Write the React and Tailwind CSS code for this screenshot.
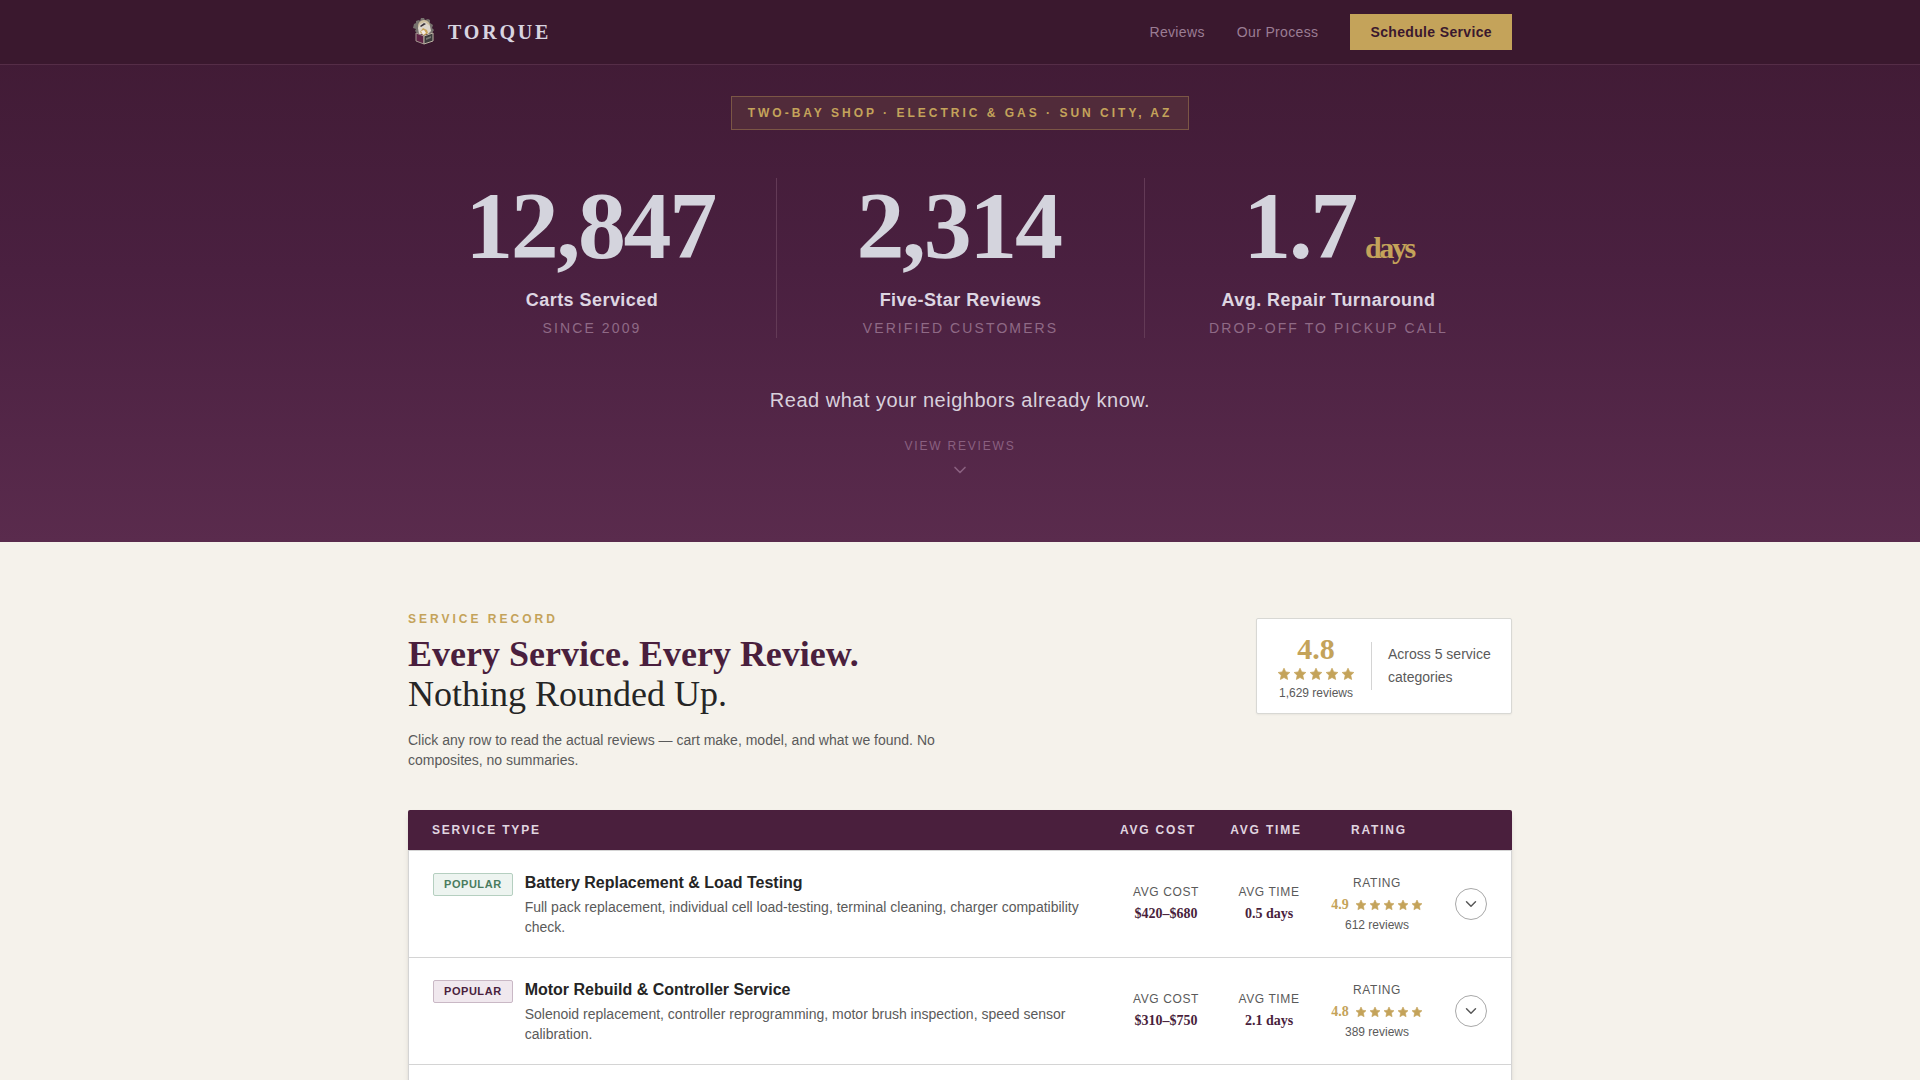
import { useState } from "react";
import { ChevronDown } from "lucide-react";

const stats = [
  { value: "12,847", unit: "", label: "Carts Serviced", note: "Since 2009" },
  { value: "2,314", unit: "", label: "Five-Star Reviews", note: "Verified Customers" },
  {
    value: "1.7",
    unit: " days",
    label: "Avg. Repair Turnaround",
    note: "Drop-off to pickup call",
  },
];

const services = [
  {
    name: "Battery Replacement & Load Testing",
    description:
      "Full pack replacement, individual cell load-testing, terminal cleaning, charger compatibility check.",
    cost: "$420–$680",
    time: "0.5 days",
    rating: "4.9",
    reviews: 612,
    tagClass: "border-[#b5cfc0] bg-[#edf4f0] text-[#4a7c5e]",
  },
  {
    name: "Motor Rebuild & Controller Service",
    description:
      "Solenoid replacement, controller reprogramming, motor brush inspection, speed sensor calibration.",
    cost: "$310–$750",
    time: "2.1 days",
    rating: "4.8",
    reviews: 389,
    tagClass: "border-[#c9b8c5] bg-[#f0e8ee] text-[#4a1f3d]",
  },
  {
    name: "Brake & Suspension Service",
    description:
      "Brake shoe and drum replacement, cable adjustment, leaf spring and bushing inspection.",
    cost: "$180–$420",
    time: "1.0 days",
    rating: "4.8",
    reviews: 274,
    tagClass: "border-[#c9b8c5] bg-[#f0e8ee] text-[#4a1f3d]",
  },
];

const Logo = () => (
  <svg width="32" height="32" viewBox="0 0 32 32" aria-hidden="true">
    <path
      d="M13 2h3l1 2 3-1 2 1v3l3 2-1 3 2 2-2 3-3 1H10l-3-3 1-2-3-1 1-4 2-1V5l3-1 1 1z"
      fill="#77726e"
    />
    <circle cx="16" cy="10" r="6" fill="#cdbf9f" />
    <path d="M10 12l2-4 5-2 5 4 1 5-3 3h-9z" fill="#ddd6cc" />
    <path d="M12 10l4-3 2 1-5 3z" fill="#39323a" />
    <path d="M12 16l3-4 4 2 1 3-4 3z" fill="#c9a45c" />
    <path d="M13 15l3-1 2 3-3 2z" fill="#f4ece6" />
    <path d="M8 17l8 3v8l-8-3z" fill="#5e2446" stroke="#a3958f" />
    <path d="M16 20l9-3v8l-9 3z" fill="#3b3b3c" stroke="#bdb3a5" />
    <path d="M18 22l5-2v2l-5 2z" fill="#77766f" />
  </svg>
);

const Stars = ({ size }) => (
  <span className="flex gap-0.5" aria-hidden="true">
    {[1, 2, 3, 4, 5].map((n) => (
      <svg
        key={n}
        width={size}
        height={size}
        viewBox="0 0 12 12"
        fill="#c4a35a"
        stroke="#c4a35a"
        strokeWidth="0.6"
        strokeLinejoin="round"
      >
        <path d="M6 1l1.500 3.200 3.500.5-2.600 2.400.7 3.600L6 9l-3.100 1.700.7-3.600L1 4.700l3.500-.5z" />
      </svg>
    ))}
  </span>
);

const Header = () => (
  <header className="fixed inset-x-0 top-0 z-10 border-b border-[#552d47] bg-[#3a182e]">
    <div className="max-w-[1200px] mx-auto px-12 py-3.5 flex items-center justify-between">
      <a href="#top" className="flex items-center gap-2 text-[#d8d4e0]">
        <Logo />
        <span className="font-['Liberation_Serif',serif] text-xl leading-6 font-bold tracking-[0.14em]">
          TORQUE
        </span>
      </a>
      <nav className="flex items-center gap-8 text-sm tracking-wide">
        <a href="#reviews" className="text-[#9b7d94]">
          Reviews
        </a>
        <a href="#process" className="text-[#9b7d94]">
          Our Process
        </a>
        <button
          type="button"
          className="h-9 px-5 bg-[#c4a35a] font-bold tracking-wide text-[#3a182e]"
        >
          Schedule Service
        </button>
      </nav>
    </div>
  </header>
);

const Hero = () => (
  <section
    id="top"
    className="bg-linear-to-b from-[#3f1a33] via-[#4a2040] to-[#5a2b4d] pt-24 pb-[62px]"
  >
    <div className="max-w-[1200px] mx-auto px-12 flex flex-col items-center">
      <p className="border border-[#7b5645] bg-[#512b3a] px-4 py-2 text-xs leading-4 font-bold uppercase tracking-[3px] text-[#c4a35a]">
        Two-Bay Shop · Electric &amp; Gas · Sun City, AZ
      </p>

      {/* STATS */}
      <div className="mt-12 w-full grid grid-cols-3">
        {stats.map((stat) => (
          <div
            key={stat.label}
            className="border-l border-[#633a56] first:border-l-0 text-center"
          >
            <div className="font-['Liberation_Serif',serif] text-8xl leading-none font-bold tracking-tight text-[#d4d4dd]">
              {stat.value}
              <span className="ml-1 text-3xl leading-none text-[#c4a35a]">
                {stat.unit}
              </span>
            </div>
            <div className="mt-3 text-lg leading-7 font-bold tracking-wide text-[#ded6e2]">
              {stat.label}
            </div>
            <div className="mt-1 text-sm leading-5 uppercase tracking-[0.15em] text-[#8f6a86]">
              {stat.note}
            </div>
          </div>
        ))}
      </div>

      <p className="mt-12 text-xl leading-7 tracking-wide text-[#d8d0dc]">
        Read what your neighbors already know.
      </p>
      <a
        href="#reviews"
        className="mt-6 flex flex-col items-center gap-1.5 text-xs leading-4 uppercase tracking-[0.15em] text-[#8a6080]"
      >
        View Reviews
        <ChevronDown size={20} />
      </a>
    </div>
  </section>
);

const ServiceRow = ({ service }) => {
  const [open, setOpen] = useState(false);

  return (
    <tr className="bg-white">
      <td className="border-b border-l border-[#d4d4d4] py-5 pl-6 pr-2 align-top text-left">
        <div className="flex items-start gap-3">
          <span
            className={`mt-0.5 shrink-0 rounded-xs border px-2.5 py-0.5 text-[11px] leading-[17px] font-bold uppercase tracking-wider ${service.tagClass}`}
          >
            Popular
          </span>
          <div>
            <h3 className="text-base leading-6 font-bold text-[#252525]">
              {service.name}
            </h3>
            <p className="mt-0.5 text-sm leading-5 text-[#5a5a5a]">
              {service.description}
            </p>
          </div>
        </div>
      </td>
      <td className="border-b border-[#d4d4d4]">
        <div className="text-xs leading-4 uppercase tracking-wider text-[#5a5a5a]">
          Avg Cost
        </div>
        <div className="mt-1 font-['Liberation_Serif',serif] text-sm leading-5 font-bold text-[#4a1f3d]">
          {service.cost}
        </div>
      </td>
      <td className="border-b border-[#d4d4d4]">
        <div className="text-xs leading-4 uppercase tracking-wider text-[#5a5a5a]">
          Avg Time
        </div>
        <div className="mt-1 font-['Liberation_Serif',serif] text-sm leading-5 font-bold text-[#4a1f3d]">
          {service.time}
        </div>
      </td>
      <td className="border-b border-[#d4d4d4]">
        <div className="text-xs leading-4 uppercase tracking-wider text-[#5a5a5a]">
          Rating
        </div>
        <div className="mt-1 mb-0.5 flex items-center justify-center gap-1.5">
          <span className="font-['Liberation_Serif',serif] text-sm leading-5 font-bold text-[#c4a35a]">
            {service.rating}
          </span>
          <Stars size={12} />
        </div>
        <div className="text-xs leading-4 text-[#5a5a5a]">
          {service.reviews} reviews
        </div>
      </td>
      <td className="border-b border-r border-[#d4d4d4] pr-6">
        <button
          type="button"
          aria-label={`Show reviews for ${service.name}`}
          aria-expanded={open}
          onClick={() => setOpen(!open)}
          className="ml-auto size-8 flex items-center justify-center rounded-full border border-[#a8a8a8] text-[#5a5a5a]"
        >
          <ChevronDown size={18} className={open ? "rotate-180" : ""} />
        </button>
      </td>
    </tr>
  );
};

const App = () => {
  return (
    <div className="min-h-screen bg-[#f5f2eb] font-['Liberation_Sans',sans-serif]">
      <Header />
      <Hero />

      <section id="reviews" className="max-w-[1200px] mx-auto px-12 pt-16 pb-24">
        <div className="flex items-start justify-between">
          <div className="max-w-[540px]">
            <p className="mb-0.5 text-xs leading-[26px] font-bold uppercase tracking-[3px] text-[#c4a35a]">
              Service Record
            </p>
            <h2 className="font-['Liberation_Serif',serif] text-4xl leading-10 font-bold text-[#4a1f3d]">
              Every Service. Every Review.
              <span className="block font-normal text-[#252525]">
                Nothing Rounded Up.
              </span>
            </h2>
            <p className="mt-4 text-sm leading-5 text-[#5a5a5a]">
              Click any row to read the actual reviews — cart make, model, and
              what we found. No composites, no summaries.
            </p>
          </div>

          {/* OVERALL RATING */}
          <div className="mt-3 flex items-center rounded-xs border border-[#d8d8d4] bg-white px-5 py-3 shadow-xs">
            <div className="flex flex-col items-center">
              <span className="font-['Liberation_Serif',serif] text-3xl leading-9 font-bold text-[#c4a35a]">
                4.8
              </span>
              <Stars size={14} />
              <span className="mt-1 text-xs leading-4 text-[#5a5a5a]">
                1,629 reviews
              </span>
            </div>
            <div className="mx-4 h-12 w-px bg-[#d4d4d4]" />
            <p className="w-[103px] text-sm leading-[23px] text-[#5a5a5a]">
              Across 5 service categories
            </p>
          </div>
        </div>

        {/* SERVICE TABLE */}
        <table className="mt-10 w-full table-fixed border-separate border-spacing-0 overflow-hidden rounded-xs text-center shadow-md">
          <colgroup>
            <col />
            <col className="w-[102px]" />
            <col className="w-[104px]" />
            <col className="w-[112px]" />
            <col className="w-[79px]" />
          </colgroup>
          <thead className="bg-[#4a1f3d] text-xs leading-4 uppercase tracking-[0.15em] text-[#e0d5e0]">
            <tr>
              <th className="h-[41px] border-b border-[#d4d4d4] pl-6 text-left font-bold">
                Service Type
              </th>
              <th className="border-b border-[#d4d4d4] pr-4 font-bold">Avg Cost</th>
              <th className="border-b border-[#d4d4d4] pr-1.5 font-bold">Avg Time</th>
              <th className="border-b border-[#d4d4d4] pl-1 font-bold">Rating</th>
              <th className="border-b border-[#d4d4d4]" aria-label="Details" />
            </tr>
          </thead>
          <tbody>
            {services.map((service) => (
              <ServiceRow key={service.name} service={service} />
            ))}
          </tbody>
        </table>
      </section>
    </div>
  );
};

export default App;
